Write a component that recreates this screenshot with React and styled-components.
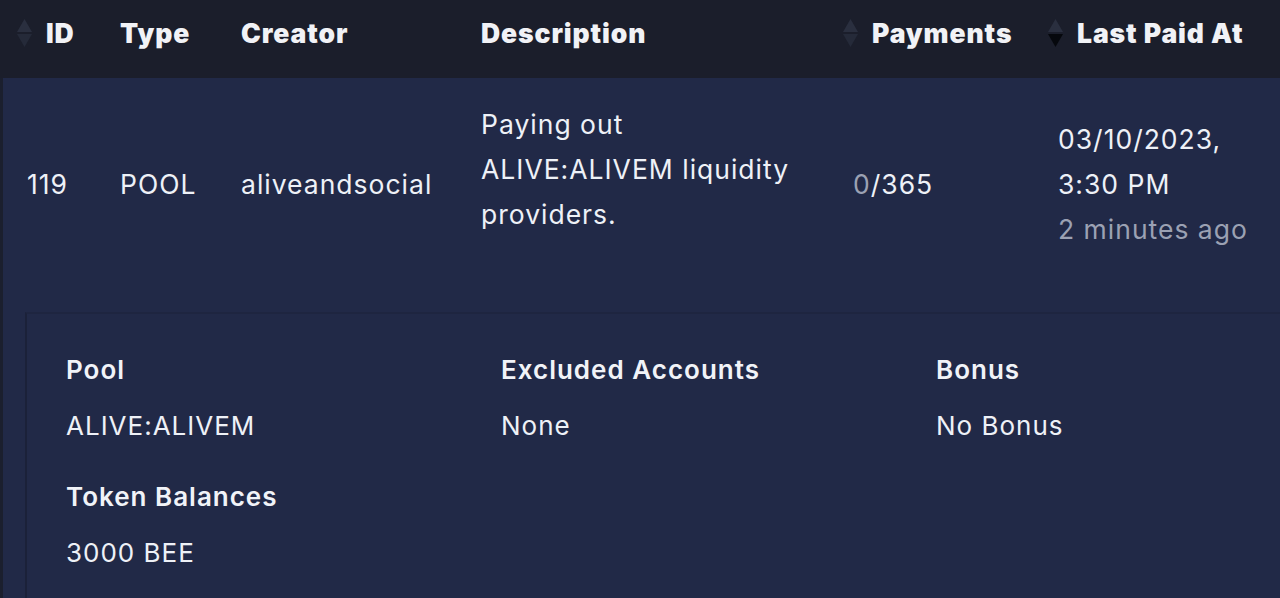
import React from "react";
import styled, { createGlobalStyle } from "styled-components";

const GlobalStyles = createGlobalStyle`
  html, body { margin: 0; padding: 0; background: #212947; }
  body { font-family: Inter, "Noto Sans", sans-serif; color: #eef1f7; overflow: hidden; }
`;

const COLS = "108px 121px 240px 372px 205px 234px";

const Table = styled.div`
  width: 1280px;
  border-left: 3px solid #1b1f2e;
  box-sizing: border-box;
`;

const HeadRow = styled.div`
  display: grid;
  grid-template-columns: ${COLS};
  height: 78px;
  margin-left: -3px;
  background: #1b1e2b;
`;

const HeadCell = styled.div`
  display: flex;
  align-items: center;
  gap: 13px;
  height: 66px;
  padding-left: ${(p) => (p.$first ? "27px" : "12px")};
  font-size: 26.5px;
  font-weight: 900;
  letter-spacing: 0.9px;
  color: #f1f2f6;
  white-space: nowrap;
`;

const SortIcon = styled.svg`
  width: 17px;
  height: 30px;
  margin-left: -11px;
  flex: none;
`;

function Sort({ active }) {
  return (
    <SortIcon viewBox="0 0 17 30">
      <path d="M8.5 1 L16 14 L1 14 Z" fill="#2a2f3f" />
      <path d="M1 16 L16 16 L8.5 29 Z" fill={active ? "#06080d" : "#252a39"} />
    </SortIcon>
  );
}

const BodyRow = styled.div`
  display: grid;
  grid-template-columns: ${COLS};
  align-items: center;
  height: 212px;
  background: #212947;
`;

const Cell = styled.div`
  padding-left: ${(p) => (p.$first ? "24px" : "9px")};
  font-size: 26.5px;
  letter-spacing: 1px;
  line-height: 45px;
  color: #eef1f7;
`;

const Desc = styled(Cell)`
  padding-bottom: 30px;
  padding-right: 30px;
`;

const Muted = styled.span`
  color: #9ba1b3;
`;

const Expanded = styled.div`
  box-sizing: border-box;
  padding: 22px 0 0 22px;
  background: #212947;
  height: 308px;
`;

const Panel = styled.div`
  box-sizing: border-box;
  border-left: 2px solid #1b2139;
  border-top: 2px solid #1e2540;
  padding: 38px 0 0 39px;
  height: 100%;
  display: grid;
  grid-template-columns: 435px 435px 1fr;
  grid-auto-rows: min-content;
  row-gap: 35px;
`;

const Field = styled.div`
  display: flex;
  flex-direction: column;
  gap: 20px;
`;

const Label = styled.div`
  font-size: 26px;
  font-weight: 600;
  letter-spacing: 1px;
  line-height: 36px;
  color: #f1f3f8;
`;

const Value = styled.div`
  font-size: 26px;
  letter-spacing: 1px;
  line-height: 36px;
  color: #eef1f7;
`;

export default function App() {
  return (
    <>
      <GlobalStyles />
      <Table>
        <HeadRow>
          <HeadCell $first><Sort />ID</HeadCell>
          <HeadCell>Type</HeadCell>
          <HeadCell>Creator</HeadCell>
          <HeadCell>Description</HeadCell>
          <HeadCell><Sort />Payments</HeadCell>
          <HeadCell><Sort active />Last Paid At</HeadCell>
        </HeadRow>
        <BodyRow>
          <Cell $first>119</Cell>
          <Cell>POOL</Cell>
          <Cell>aliveandsocial</Cell>
          <Desc>Paying out ALIVE:ALIVEM liquidity providers.</Desc>
          <Cell><Muted>0</Muted>/365</Cell>
          <Cell>
            03/10/2023,
            <br />
            3:30 PM
            <br />
            <Muted>2 minutes ago</Muted>
          </Cell>
        </BodyRow>
        <Expanded>
          <Panel>
            <Field>
              <Label>Pool</Label>
              <Value>ALIVE:ALIVEM</Value>
            </Field>
            <Field>
              <Label>Excluded Accounts</Label>
              <Value>None</Value>
            </Field>
            <Field>
              <Label>Bonus</Label>
              <Value>No Bonus</Value>
            </Field>
            <Field>
              <Label>Token Balances</Label>
              <Value>3000 BEE</Value>
            </Field>
          </Panel>
        </Expanded>
      </Table>
    </>
  );
}
